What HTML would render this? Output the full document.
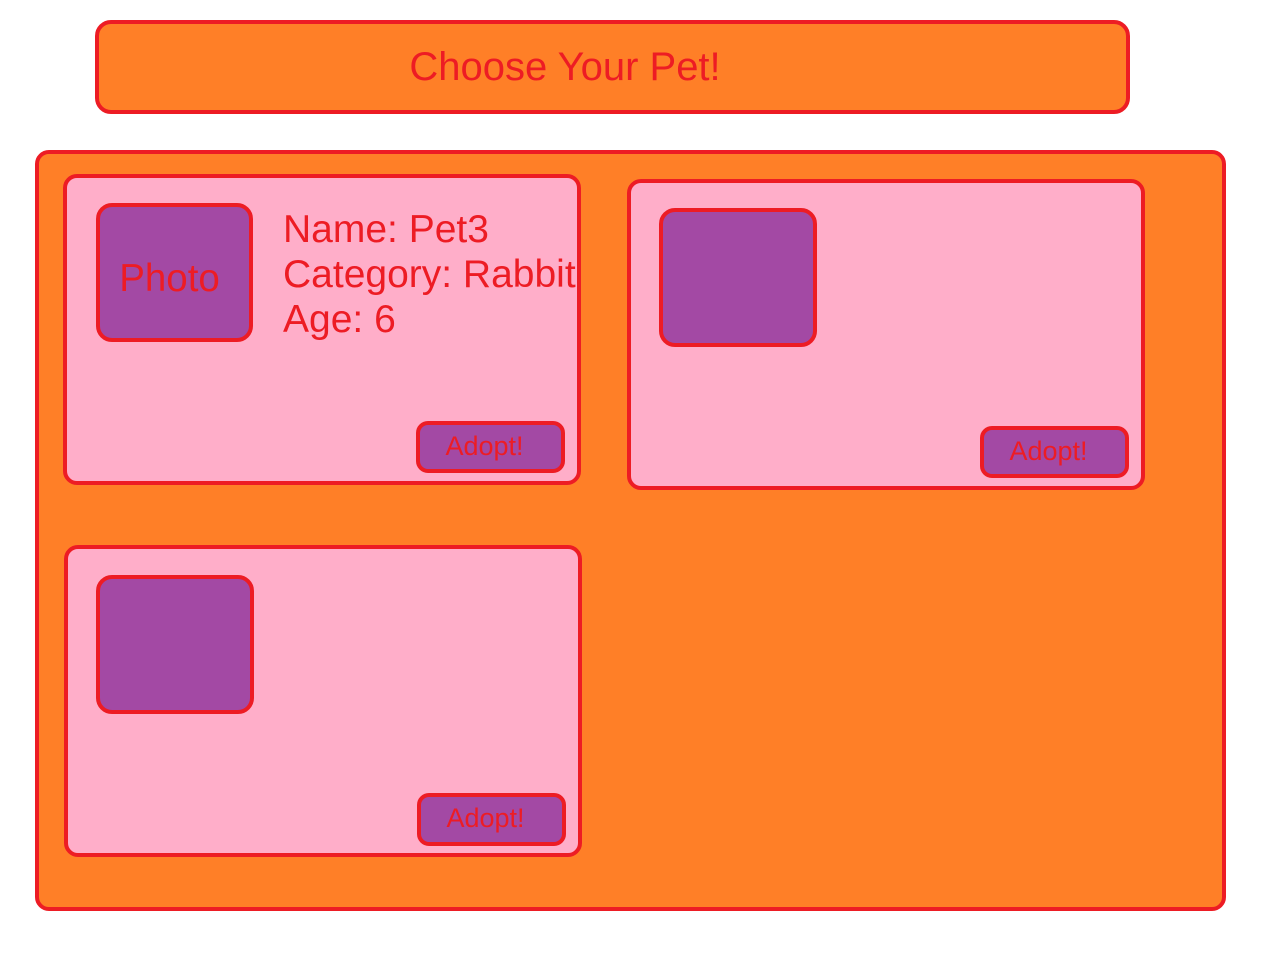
<!DOCTYPE html>
<html><head><style>
body{margin:0;width:1280px;height:960px;background:#fff;position:relative;overflow:hidden;font-family:"Liberation Sans",sans-serif;color:#ed1c24}
.b{position:absolute;box-sizing:border-box;border:4px solid #ed1c24}
.o{background:#ff7f27}
.p{background:#ffaec9;border-radius:14px}
.u{background:#a349a4;border-radius:16px}
.a{background:#a349a4;border-radius:12px;font-size:27px;text-align:center;line-height:42px;padding-right:12px}
.t{position:absolute;white-space:nowrap}
</style></head><body>
<div class="b o" style="left:95px;top:20px;width:1035px;height:94px;border-radius:16px"></div>
<div class="t" style="left:0;width:1130px;text-align:center;top:45px;font-size:40px;line-height:44px">Choose Your Pet!</div>
<div class="b o" style="left:35px;top:150px;width:1191px;height:761px;border-radius:14px"></div>

<div class="b p" style="left:63px;top:174px;width:518px;height:311px"></div>
<div class="b u" style="left:96px;top:203px;width:157px;height:139px"></div>
<div class="t" style="left:96px;width:147px;text-align:center;top:257px;font-size:38.5px;line-height:44px">Photo</div>
<div class="t" style="left:283px;top:207px;font-size:39px;line-height:45px">Name: Pet3<br>Category: Rabbit<br>Age: 6</div>
<div class="b a" style="left:416px;top:421px;width:149px;height:52px">Adopt!</div>

<div class="b p" style="left:627px;top:179px;width:518px;height:311px"></div>
<div class="b u" style="left:659px;top:208px;width:158px;height:139px"></div>
<div class="b a" style="left:980px;top:426px;width:149px;height:52px">Adopt!</div>

<div class="b p" style="left:64px;top:545px;width:518px;height:312px"></div>
<div class="b u" style="left:96px;top:575px;width:158px;height:139px"></div>
<div class="b a" style="left:417px;top:793px;width:149px;height:53px">Adopt!</div>
</body></html>
